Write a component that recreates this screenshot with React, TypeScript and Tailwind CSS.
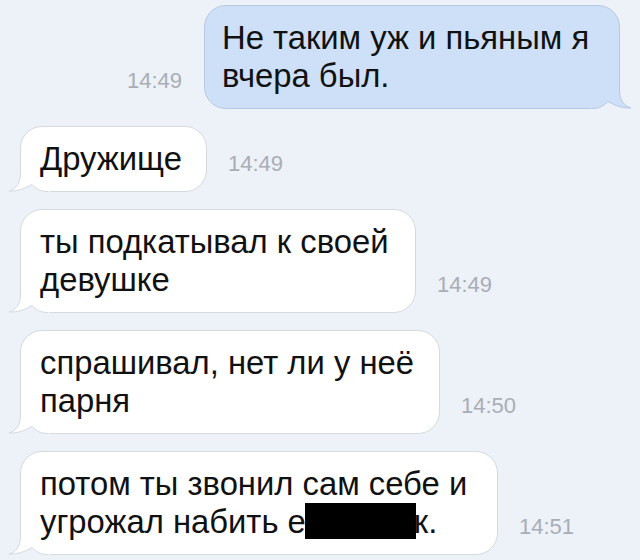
import type { ReactNode } from 'react'

type Msg = {
  id: number
  out?: boolean
  time: string
  width: string
  body: ReactNode
}

const MESSAGES: Msg[] = [
  {
    id: 1,
    out: true,
    time: '14:49',
    width: 'w-[416px]',
    body: (
      <>
        Не таким уж и пьяным я
        <br />
        вчера был.
      </>
    ),
  },
  { id: 2, time: '14:49', width: 'w-[187px]', body: 'Дружище' },
  {
    id: 3,
    time: '14:49',
    width: 'w-[396px]',
    body: (
      <>
        ты подкатывал к своей
        <br />
        девушке
      </>
    ),
  },
  {
    id: 4,
    time: '14:50',
    width: 'w-[420px]',
    body: (
      <>
        спрашивал, нет ли у неё
        <br />
        парня
      </>
    ),
  },
  {
    id: 5,
    time: '14:51',
    width: 'w-[478px]',
    body: (
      <>
        потом ты звонил сам себе и
        <br />
        угрожал набить е
        <span className="inline-block w-[111px] h-[36px] bg-black align-top -ml-[1px] -mr-[2px]" />
        к.
      </>
    ),
  },
]

export default function App() {
  return (
    <div
      className="w-[640px] h-[560px] overflow-hidden bg-[#edf1f8] pt-[5px] flex flex-col gap-[17px]"
      style={{ fontFamily: '"Liberation Sans", Arial, sans-serif' }}
    >
      {MESSAGES.map((m) => (
        <Row key={m.id} msg={m} />
      ))}
    </div>
  )
}

function Row({ msg }: { msg: Msg }) {
  const stamp = (
    <span className="mb-[15px] text-[22px] leading-[26px] text-[#a9aeb6] shrink-0">{msg.time}</span>
  )

  if (msg.out) {
    return (
      <div className="flex items-end justify-end gap-[22px] pr-[20px]">
        {stamp}
        <Bubble out width={msg.width}>
          {msg.body}
        </Bubble>
      </div>
    )
  }

  return (
    <div className="flex items-end gap-[21px] pl-[20px]">
      <Bubble width={msg.width}>{msg.body}</Bubble>
      {stamp}
    </div>
  )
}

function Bubble({ out, width, children }: { out?: boolean; width: string; children: ReactNode }) {
  return (
    <div
      className={`relative shrink-0 rounded-[22px] border py-[13px] text-[32.8px] leading-[38px] text-[#111] whitespace-nowrap ${width} ${
        out ? 'pl-[17px] bg-[#cde0f7] border-[#b6c9e2]' : 'pl-[19px] bg-white border-[#d5d9e0]'
      }`}
    >
      <Tail out={out} />
      <span className="relative">{children}</span>
    </div>
  )
}

// little curled tail at the bottom corner of a bubble
function Tail({ out }: { out?: boolean }) {
  const fill = out ? '#cde0f7' : '#ffffff'
  const stroke = out ? '#b6c9e2' : '#d5d9e0'
  const edge = 'M12.5 0 L12.5 12 C12.5 21 8 27 1 29 C9 29.5 17 26.5 24 22.5 C28 26.5 32 29.5 40 29.5'
  return (
    <svg
      width="42"
      height="30"
      viewBox="0 0 42 30"
      className={`absolute bottom-[-1px] pointer-events-none ${
        out ? 'right-[-13px] -scale-x-100' : 'left-[-13px]'
      }`}
    >
      {/* page colour under the curl, hides the rounded corner */}
      <path d="M0 30 L1 29 C9 29.5 17 26.5 24 22.5 C28 26.5 32 29.5 40 29.5 L40 30 Z" fill="#edf1f8" />
      <path d={`${edge} L42 29.5 L42 0 Z`} fill={fill} />
      <path d={edge} fill="none" stroke={stroke} strokeWidth="1" />
    </svg>
  )
}
